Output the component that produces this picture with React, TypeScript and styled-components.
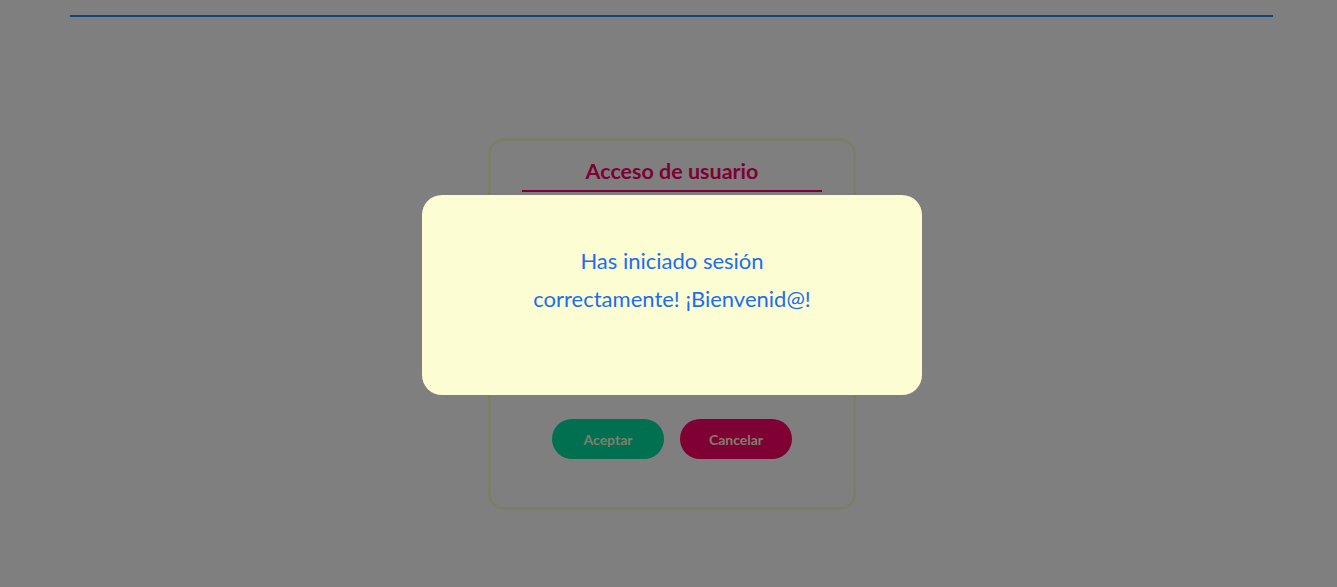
import React from "react";
import styled, { createGlobalStyle } from "styled-components";

const Global = createGlobalStyle`
  html, body { margin: 0; padding: 0; background: #ffffff; }
  body { font-family: Lato, "Noto Sans", sans-serif; }
`;

const Page = styled.div`
  width: 1337px;
  height: 587px;
  display: flex;
  flex-direction: column;
  align-items: flex-start;
`;

const TopRule = styled.div`
  margin: 15px 0 0 70px;
  width: 1203px;
  height: 2px;
  background: #1c88ff;
`;

const Main = styled.main`
  align-self: stretch;
  display: flex;
  justify-content: center;
  padding: 121px 0 0 7px;
`;

const Card = styled.form`
  box-sizing: border-box;
  width: 368px;
  height: 372px;
  border: 3px solid #fafcd0;
  border-radius: 16px;
  padding: 18px 31px 0;
  display: flex;
  flex-direction: column;
  align-items: center;
`;

const Title = styled.h2`
  margin: 0;
  width: 300px;
  text-align: center;
  font-size: 21.5px;
  line-height: 24px;
  font-weight: 700;
  color: #ff0066;
  padding-bottom: 7px;
  border-bottom: 2px solid #ff0066;
`;

const Fields = styled.div`
  height: 227px;
`;

const Buttons = styled.div`
  display: flex;
  gap: 16px;
`;

const Btn = styled.button<{ $tone: "ok" | "cancel" }>`
  width: 112px;
  height: 40px;
  border: none;
  border-radius: 20px;
  font-family: Lato, "Noto Sans", sans-serif;
  font-weight: 700;
  font-size: 14px;
  color: #fcfcd8;
  background: ${(p) => (p.$tone === "ok" ? "#00e0a0" : "#ff0066")};
`;

const Overlay = styled.div`
  position: fixed;
  inset: 0;
  background: rgba(0, 0, 0, 0.5);
  display: flex;
  align-items: center;
  justify-content: center;
  padding: 3px 0 0 7px;
  box-sizing: border-box;
`;

const Modal = styled.div`
  width: 500px;
  height: 200px;
  box-sizing: border-box;
  background: #fcfdd2;
  border-radius: 20px;
  padding-top: 47px;
  display: flex;
  justify-content: center;
`;

const Message = styled.p`
  margin: 0;
  max-width: 320px;
  text-align: center;
  font-size: 22px;
  line-height: 38px;
  color: #1a6ff0;
`;

export default function App() {
  return (
    <>
      <Global />
      <Page>
        <TopRule />
        <Main>
          <Card>
            <Title>Acceso de usuario</Title>
            <Fields />
            <Buttons>
              <Btn type="button" $tone="ok">Aceptar</Btn>
              <Btn type="button" $tone="cancel">Cancelar</Btn>
            </Buttons>
          </Card>
        </Main>
      </Page>
      <Overlay>
        <Modal>
          <Message>Has iniciado sesión correctamente! ¡Bienvenid@!</Message>
        </Modal>
      </Overlay>
    </>
  );
}
